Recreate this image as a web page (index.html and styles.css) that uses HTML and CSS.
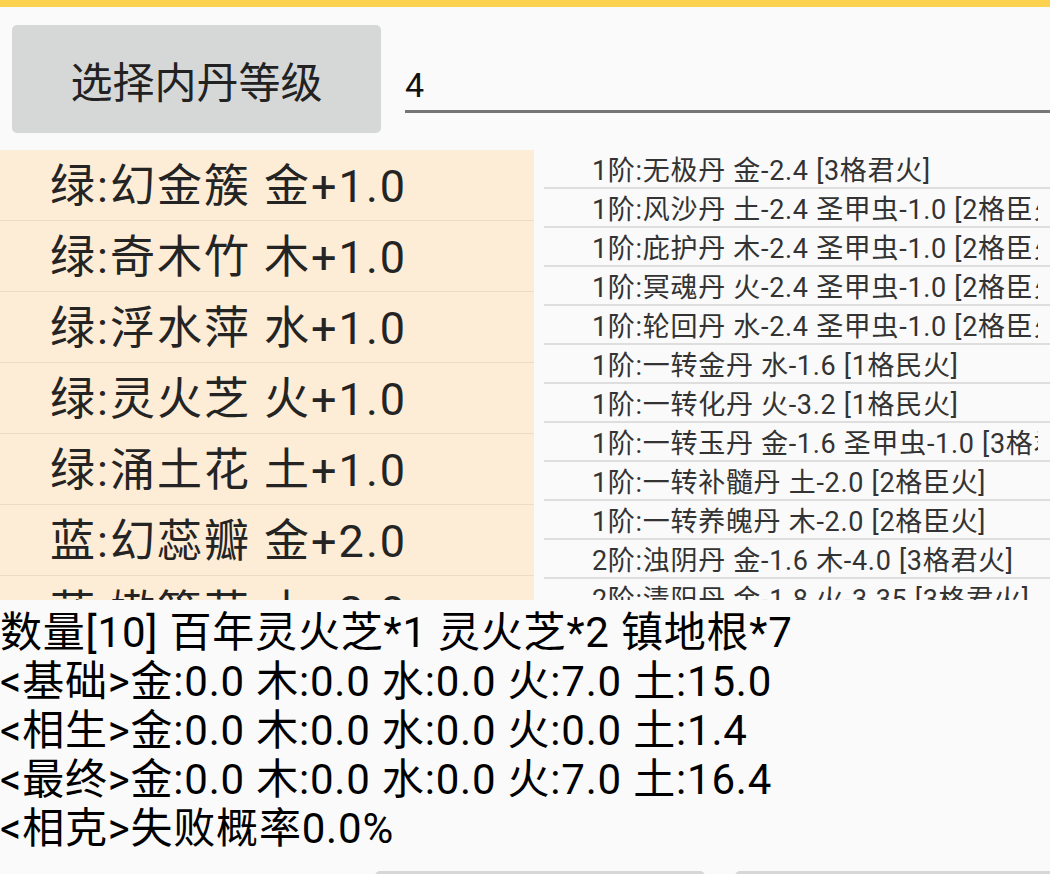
FILE: index.html
```html
<!DOCTYPE html>
<html lang="zh">
<head>
<meta charset="utf-8">
<title>内丹</title>
<link rel="stylesheet" href="styles.css">
</head>
<body>
<div class="topbar"></div>
<div class="header">
  <div class="btn-level">选择内丹等级</div>
  <div class="input-level"><span class="input-value">4</span></div>
</div>
<div class="lists">
  <div class="list-left">
    <div class="item-left">绿:幻金簇 金+1.0</div>
    <div class="item-left">绿:奇木竹 木+1.0</div>
    <div class="item-left">绿:浮水萍 水+1.0</div>
    <div class="item-left">绿:灵火芝 火+1.0</div>
    <div class="item-left">绿:涌土花 土+1.0</div>
    <div class="item-left">蓝:幻蕊瓣 金+2.0</div>
    <div class="item-left">蓝:嫩篱草 木+2.0</div>
  </div>
  <div class="list-right">
    <div class="item-right"><span class="item-text">1阶:无极丹 金-2.4 [3格君火]</span></div>
    <div class="item-right"><span class="item-text">1阶:风沙丹 土-2.4 圣甲虫-1.0 [2格臣火]</span></div>
    <div class="item-right"><span class="item-text">1阶:庇护丹 木-2.4 圣甲虫-1.0 [2格臣火]</span></div>
    <div class="item-right"><span class="item-text">1阶:冥魂丹 火-2.4 圣甲虫-1.0 [2格臣火]</span></div>
    <div class="item-right"><span class="item-text">1阶:轮回丹 水-2.4 圣甲虫-1.0 [2格臣火]</span></div>
    <div class="item-right"><span class="item-text">1阶:一转金丹 水-1.6 [1格民火]</span></div>
    <div class="item-right"><span class="item-text">1阶:一转化丹 火-3.2 [1格民火]</span></div>
    <div class="item-right"><span class="item-text">1阶:一转玉丹 金-1.6 圣甲虫-1.0 [3格君火]</span></div>
    <div class="item-right"><span class="item-text">1阶:一转补髓丹 土-2.0 [2格臣火]</span></div>
    <div class="item-right"><span class="item-text">1阶:一转养魄丹 木-2.0 [2格臣火]</span></div>
    <div class="item-right"><span class="item-text">2阶:浊阴丹 金-1.6 木-4.0 [3格君火]</span></div>
    <div class="item-right"><span class="item-text">2阶:清阳丹 金-1.8 火-3.35 [3格君火]</span></div>
  </div>
</div>
<div class="result">
  <div class="result-line">数量[10] 百年灵火芝*1 灵火芝*2 镇地根*7</div>
  <div class="result-line">&lt;基础&gt;金:0.0 木:0.0 水:0.0 火:7.0 土:15.0</div>
  <div class="result-line">&lt;相生&gt;金:0.0 木:0.0 水:0.0 火:0.0 土:1.4</div>
  <div class="result-line">&lt;最终&gt;金:0.0 木:0.0 水:0.0 火:7.0 土:16.4</div>
  <div class="result-line">&lt;相克&gt;失败概率0.0%</div>
</div>
<div class="bottom-buttons">
  <div class="btn-bottom"></div>
  <div class="btn-bottom"></div>
</div>
</body>
</html>
```
FILE: styles.css
```css
html, body {
  margin: 0;
  padding: 0;
  background: #fafafa;
  height: 874px;
  overflow: hidden;
  font-family: Roboto, "Noto Sans CJK SC", sans-serif;
}

.topbar {
  height: 7px;
  background: #fdd24f;
}

.header {
  display: flex;
  align-items: flex-start;
  padding: 18px 0 0 12px;
  height: 125px;
  box-sizing: border-box;
}

.btn-level {
  width: 369px;
  height: 108px;
  background: #d6d7d7;
  border-radius: 5px;
  display: flex;
  align-items: center;
  justify-content: center;
  font-size: 42px;
  color: #222;
}

.input-level {
  margin-left: 24px;
  flex: 1;
  height: 88px;
  border-bottom: 3px solid #767676;
  display: flex;
  align-items: flex-end;
  padding-bottom: 8px;
  box-sizing: border-box;
}

.input-value {
  font-size: 34px;
  letter-spacing: 2px;
  color: #111;
  line-height: 1;
}

.lists {
  display: flex;
  height: 450px;
  margin-top: 18px;
  overflow: hidden;
}

.list-left {
  width: 534px;
  flex-shrink: 0;
  background: #fdecd6;
  overflow: hidden;
}

.item-left {
  border-bottom: 1px solid #ecdcc6;
  display: flex;
  align-items: center;
  padding: 0 0 6px 50px;
  height: 64px;
  font-size: 45px;
  letter-spacing: 2px;
  color: #242424;
  white-space: nowrap;
}

.list-right {
  flex: 1;
  margin-left: 10px;
  overflow: hidden;
}

.item-right {
  height: 37px;
  border-bottom: 2px solid #dedede;
  display: flex;
  align-items: center;
  padding: 0 12px 0 48px;
  font-size: 27px;
  letter-spacing: 0.7px;
  color: #333;
  white-space: nowrap;
}

.item-text {
  display: block;
  min-width: 0;
  flex: 1;
  overflow: hidden;
}

.result {
  padding-top: 8px;
  height: 271px;
  box-sizing: border-box;
}

.result-line {
  font-size: 42px;
  line-height: 49px;
  letter-spacing: 0.8px;
  color: #000;
  white-space: nowrap;
}

.bottom-buttons {
  display: flex;
  gap: 30px;
  padding-left: 375px;
  height: 3px;
  overflow: hidden;
}

.btn-bottom {
  flex-shrink: 0;
  width: 330px;
  height: 60px;
  background: #d6d7d7;
  border-radius: 5px;
}
```
